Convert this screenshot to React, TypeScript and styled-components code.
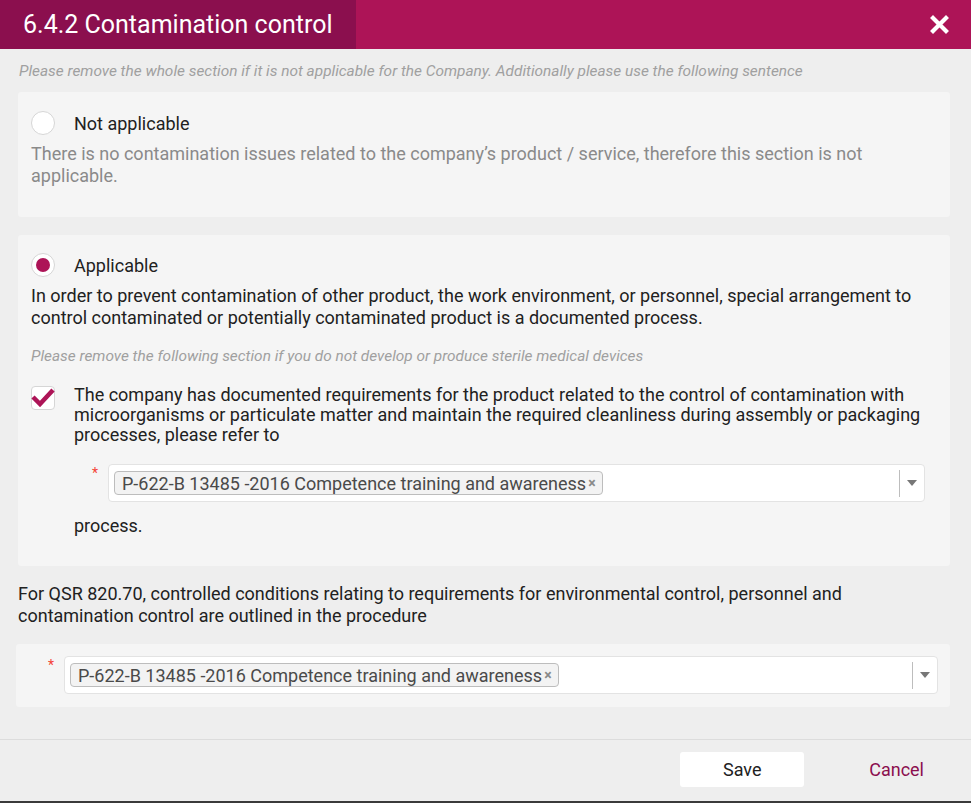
import styled, { createGlobalStyle } from "styled-components";

const GlobalStyle = createGlobalStyle`
  html, body {
    margin: 0;
    padding: 0;
    background: #eeeeee;
    font-family: Roboto, "Noto Sans", sans-serif;
  }
  * { box-sizing: border-box; }
`;

const Dialog = styled.div`
  width: 971px;
  height: 803px;
  background: #eeeeee;
  display: flex;
  flex-direction: column;
  border-bottom: 2px solid #3a3a3a;
`;

const Header = styled.div`
  height: 49px;
  flex-shrink: 0;
  display: flex;
  align-items: stretch;
  background: #ad1457;
`;

const Title = styled.div`
  background: #8b0f4e;
  color: #fff;
  font-size: 25px;
  white-space: nowrap;
  padding: 0 0 1px 23px;
  width: 356px;
  display: flex;
  align-items: center;
`;

const Close = styled.button`
  margin-left: auto;
  width: 60px;
  border: none;
  background: transparent;
  display: flex;
  align-items: center;
  justify-content: center;
  padding: 0 4px 0 0;
  cursor: pointer;
`;

const Body = styled.div`
  flex: 1;
  padding: 13px 21px 0 18px;
`;

const Hint = styled.div<{ $indent?: number }>`
  font-style: italic;
  font-size: 15.4px;
  color: #a0a0a0;
  line-height: 18px;
  white-space: nowrap;
  padding-left: ${(p) => p.$indent ?? 1}px;
`;

const Card = styled.div<{ $pad?: string; $shift?: number }>`
  background: #f5f5f5;
  border-radius: 3px;
  margin-left: ${(p) => p.$shift ?? 0}px;
  padding: ${(p) => p.$pad ?? "19px 13px"};
`;

const OptionRow = styled.div`
  display: flex;
  align-items: center;
  gap: 19px;
  font-size: 18px;
  color: #212121;
  height: 24px;
`;

const Radio = styled.span<{ $checked?: boolean }>`
  width: 24px;
  height: 24px;
  border-radius: 50%;
  background: #fff;
  border: 1px solid #d6d6d6;
  display: flex;
  align-items: center;
  justify-content: center;
  flex-shrink: 0;
  &::after {
    content: "";
    display: ${(p) => (p.$checked ? "block" : "none")};
    width: 14px;
    height: 14px;
    border-radius: 50%;
    background: #ad1457;
  }
`;

const Text = styled.p<{ $muted?: boolean; $indent?: number }>`
  margin: 0;
  font-size: 18px;
  line-height: 22px;
  padding-left: ${(p) => p.$indent ?? 0}px;
  color: ${(p) => (p.$muted ? "#8a8a8a" : "#212121")};
`;

const CheckRow = styled.div`
  display: flex;
  align-items: flex-start;
  gap: 19px;
`;

const CheckBox = styled.span`
  position: relative;
  width: 24px;
  height: 24px;
  flex-shrink: 0;
  background: #fff;
  border: 1px solid #d6d6d6;
  border-radius: 4px;
  margin-top: 1px;
  svg {
    position: absolute;
    left: -2px;
    top: 0px;
  }
`;

const CheckText = styled.p`
  margin: 0;
  font-size: 18px;
  line-height: 20px;
  color: #212121;
`;

const SelectRow = styled.div<{ $indent: number }>`
  display: flex;
  align-items: flex-start;
  padding-left: ${(p) => p.$indent}px;
`;

const Star = styled.span`
  color: #f44336;
  font-size: 14px;
  width: 16px;
  padding-top: 1px;
`;

const Select = styled.div`
  flex: 1;
  height: 38px;
  background: #fff;
  border: 1px solid #e3e3e3;
  border-radius: 4px;
  display: flex;
  align-items: center;
  padding-left: 5px;
`;

const Tag = styled.span`
  display: inline-flex;
  align-items: center;
  height: 24px;
  padding: 0 6px 0 7px;
  border: 1px solid #bdbdbd;
  border-radius: 4px;
  background: #f3f3f3;
  font-size: 18px;
  color: #4a4a4a;
  gap: 2px;
`;

const TagX = styled.span`
  font-size: 14px;
  color: #8a8a8a;
  font-weight: bold;
`;

const Arrow = styled.span`
  margin-left: auto;
  height: 27px;
  width: 25px;
  border-left: 1px solid #bdbdbd;
  display: flex;
  align-items: center;
  justify-content: center;
  &::after {
    content: "";
    border-left: 5px solid transparent;
    border-right: 5px solid transparent;
    border-top: 6px solid #777;
  }
`;

const Spacer = styled.div<{ $h: number }>`
  height: ${(p) => p.$h}px;
`;

const Footer = styled.div`
  height: 62px;
  flex-shrink: 0;
  border-top: 1px solid #dcdcdc;
  display: flex;
  align-items: center;
  justify-content: flex-end;
  padding: 0 47px 2px 0;
`;

const SaveButton = styled.button`
  width: 124px;
  height: 35px;
  background: #fff;
  border: none;
  border-radius: 3px;
  font-family: inherit;
  font-size: 18px;
  color: #212121;
  cursor: pointer;
`;

const CancelButton = styled.button`
  margin-left: 65px;
  background: transparent;
  border: none;
  font-family: inherit;
  font-size: 18px;
  color: #8b0f4e;
  padding: 0;
  cursor: pointer;
`;

const DocSelect = () => (
  <Select>
    <Tag>
      P-622-B 13485 -2016 Competence training and awareness<TagX>×</TagX>
    </Tag>
    <Arrow />
  </Select>
);

const App = () => {
  return (
    <>
      <GlobalStyle />
      <Dialog>
        <Header>
          <Title>6.4.2 Contamination control</Title>
          <Close aria-label="close">
            <svg width="19" height="19" viewBox="0 0 19 19">
              <path d="M3 3 L16 16 M16 3 L3 16" stroke="#fff" strokeWidth="4.2" strokeLinecap="square" />
            </svg>
          </Close>
        </Header>
        <Body>
          <Hint>
            Please remove the whole section if it is not applicable for the Company. Additionally please use the following sentence
          </Hint>
          <Spacer $h={12} />
          <Card $pad="19px 13px 30px">
            <OptionRow>
              <Radio />
              Not applicable
            </OptionRow>
            <Spacer $h={8} />
            <Text $muted>
              There is no contamination issues related to the company’s product / service, therefore this section is not applicable.
            </Text>
          </Card>
          <Spacer $h={18} />
          <Card $pad="18px 25px 29px 13px">
            <OptionRow>
              <Radio $checked />
              Applicable
            </OptionRow>
            <Spacer $h={8} />
            <Text>
              In order to prevent contamination of other product, the work environment, or personnel, special arrangement to control contaminated or potentially contaminated product is a documented process.
            </Text>
            <Spacer $h={18} />
            <Hint $indent={0}>Please remove the following section if you do not develop or produce sterile medical devices</Hint>
            <Spacer $h={20} />
            <CheckRow>
              <CheckBox>
                <svg width="26" height="20" viewBox="0 0 26 20">
                  <path d="M3 10 L10 17 L23 3" stroke="#ad1457" strokeWidth="4.5" fill="none" strokeLinejoin="miter" />
                </svg>
              </CheckBox>
              <CheckText>
                The company has documented requirements for the product related to the control of contamination with microorganisms or particulate matter and maintain the required cleanliness during assembly or packaging processes, please refer to
              </CheckText>
            </CheckRow>
            <Spacer $h={19} />
            <SelectRow $indent={61}>
              <Star>*</Star>
              <DocSelect />
            </SelectRow>
            <Spacer $h={13} />
            <Text $indent={43}>process.</Text>
          </Card>
          <Spacer $h={17} />
          <Text>
            For QSR 820.70, controlled conditions relating to requirements for environmental control, personnel and contamination control are outlined in the procedure
          </Text>
          <Spacer $h={17} />
          <Card $pad="12px 12px 13px 32px" $shift={-2}>
            <SelectRow $indent={0}>
              <Star>*</Star>
              <DocSelect />
            </SelectRow>
          </Card>
        </Body>
        <Footer>
          <SaveButton>Save</SaveButton>
          <CancelButton>Cancel</CancelButton>
        </Footer>
      </Dialog>
    </>
  );
};

export default App;
